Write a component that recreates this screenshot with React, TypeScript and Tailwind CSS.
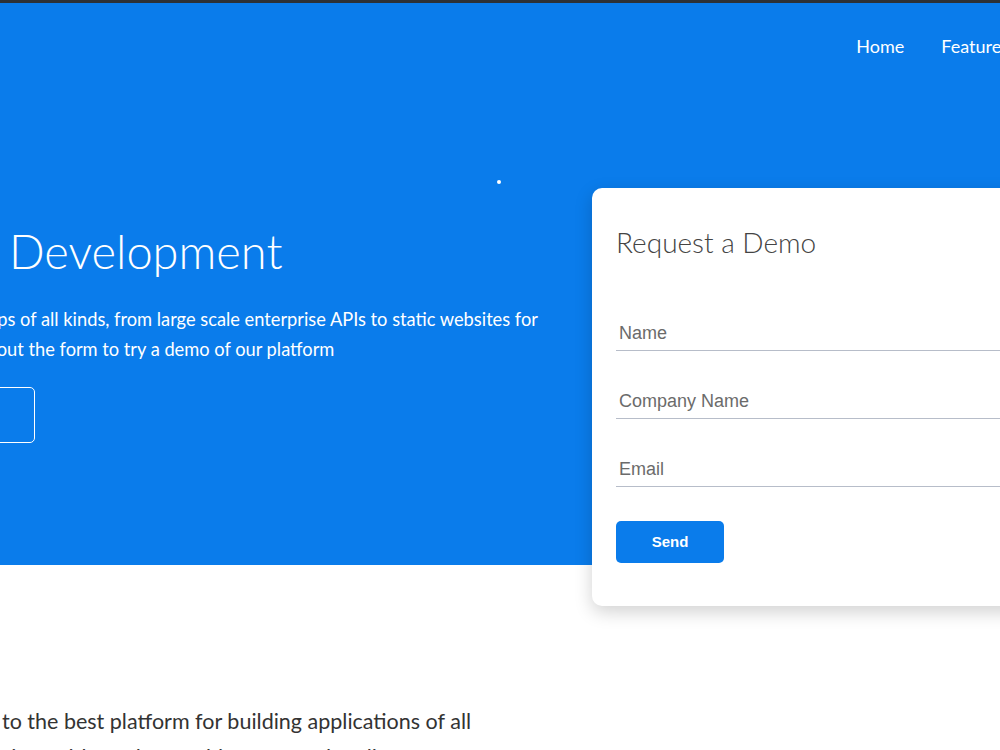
import { useState } from "react";

const FIELDS = ["Name", "Company Name", "Email"];

function DemoCard() {
  const [values, setValues] = useState<Record<string, string>>({});

  return (
    <div className="w-[440px] shrink-0 rounded-[10px] bg-white px-6 pt-[34px] pb-[43px] shadow-[0_6px_18px_rgb(0_0_0/18%)]">
      <h2 className="font-['Lato',sans-serif] text-[28px] font-light leading-[40px] text-[#444]">Request a Demo</h2>
      <form className="mt-[52px] flex flex-col gap-[31px]" onSubmit={(e) => e.preventDefault()}>
        {FIELDS.map((f) => (
          <input
            key={f}
            placeholder={f}
            value={values[f] ?? ""}
            onChange={(e) => setValues({ ...values, [f]: e.target.value })}
            className="h-[37px] w-full border-b border-[#b7bdc9] bg-transparent px-[3px] pt-[3px] font-['Liberation_Sans',Arial,sans-serif] text-[18px] text-[#555] outline-none placeholder:text-[#6b6b6b]"
          />
        ))}
        <button
          type="submit"
          className="mt-[3px] h-[42px] w-[108px] rounded-[5px] bg-[#0a7ceb] font-['Liberation_Sans',Arial,sans-serif] text-[15px] font-bold text-white"
        >
          Send
        </button>
      </form>
    </div>
  );
}

export default function App() {
  return (
    <div className="h-[750px] w-[1000px] overflow-hidden bg-white font-['Lato',sans-serif]">
      <div className="h-[3px] bg-[#2d3136]" />
      <section className="relative h-[562px] bg-[#0a7ceb]">
        <nav className="flex justify-end gap-[37px] pt-[31px] -mr-[9px] text-[18px] text-white">
          <a className="leading-[24px]">Home</a>
          <a className="leading-[24px]">Features</a>
        </nav>
        <span className="absolute left-[497px] top-[177px] h-[4px] w-[4px] rounded-full bg-white" />
        <div className="mt-[130px] flex">
          <div className="w-[592px] shrink-0 pt-[33px] text-white">
            <h1 className="whitespace-nowrap pl-[9px] text-[47px] font-light leading-[60px]">Development</h1>
            <p className="mt-[23px] whitespace-nowrap -ml-[22px] text-[18.25px] leading-[30px]">apps of all kinds, from large scale enterprise APIs to static websites for</p>
            <p className="whitespace-nowrap -ml-[126px] text-[18.25px] leading-[30px]">businesses. Fill out the form to try a demo of our platform</p>
            <a className="mt-[23px] -ml-[120px] flex h-[56px] w-[155px] items-center justify-center rounded-[5px] border border-white text-[18px]" />
          </div>
          <DemoCard />
        </div>
      </section>
      <div className="pt-[138px] pl-[2px] text-[21.5px] leading-[36px] text-[#333]">
        <p className="whitespace-nowrap">to the best platform for building applications of all</p>
        <p className="whitespace-nowrap">sizes with modern architecture and scaling</p>
      </div>
    </div>
  );
}
